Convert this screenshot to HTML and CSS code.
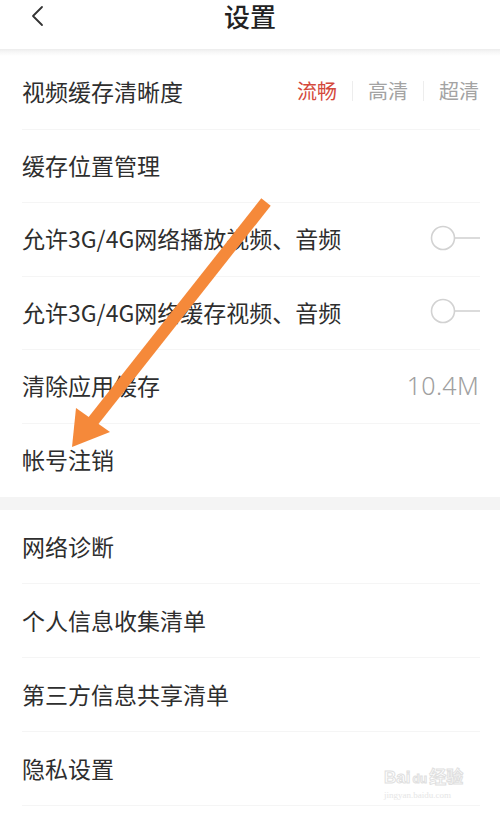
FILE: index.html
```html
<!DOCTYPE html>
<html lang="zh-CN">
<head>
<meta charset="utf-8">
<title>设置</title>
<link rel="stylesheet" href="styles.css">
</head>
<body>
<div class="page">
  <header class="topbar">
    <svg class="back" width="14" height="22" viewBox="0 0 14 22"><path d="M12 2 L3 11 L12 20" fill="none" stroke="#333" stroke-width="1.8" stroke-linecap="round" stroke-linejoin="round"/></svg>
    <h1 class="title">设置</h1>
  </header>
  <div class="shade"></div>

  <section class="group first">
    <div class="row">
      <span class="label">视频缓存清晰度</span>
      <div class="quality">
        <span class="q active">流畅</span><span class="sep"></span><span class="q">高清</span><span class="sep"></span><span class="q">超清</span>
      </div>
    </div>
    <div class="row">
      <span class="label">缓存位置管理</span>
    </div>
    <div class="row">
      <span class="label">允许3G/4G网络播放视频、音频</span>
      <svg class="toggle" width="50" height="28" viewBox="0 0 50 28"><circle cx="13" cy="14" r="11.5" fill="#fff" stroke="#d2d2d2" stroke-width="1.6"/><line x1="24.5" y1="14" x2="50" y2="14" stroke="#d2d2d2" stroke-width="1.6"/></svg>
    </div>
    <div class="row">
      <span class="label">允许3G/4G网络缓存视频、音频</span>
      <svg class="toggle" width="50" height="28" viewBox="0 0 50 28"><circle cx="13" cy="14" r="11.5" fill="#fff" stroke="#d2d2d2" stroke-width="1.6"/><line x1="24.5" y1="14" x2="50" y2="14" stroke="#d2d2d2" stroke-width="1.6"/></svg>
    </div>
    <div class="row">
      <span class="label">清除应用缓存</span>
      <span class="value">10.4M</span>
    </div>
    <div class="row last">
      <span class="label">帐号注销</span>
    </div>
  </section>

  <div class="gap"></div>

  <section class="group">
    <div class="row">
      <span class="label">网络诊断</span>
    </div>
    <div class="row">
      <span class="label">个人信息收集清单</span>
    </div>
    <div class="row">
      <span class="label">第三方信息共享清单</span>
    </div>
    <div class="row">
      <span class="label">隐私设置</span>
    </div>
  </section>

  <svg class="arrow" width="500" height="818" viewBox="0 0 500 818">
    <line x1="266" y1="202" x2="90" y2="425" stroke="#f5893a" stroke-width="12"/>
    <polygon points="72,447 76,408 110,432" fill="#f5893a"/>
  </svg>

  <div class="watermark">
    <span class="wm-main">Bai<span class="wm-du">du</span>经验</span>
    <span class="wm-sub">jingyan.baidu.com</span>
  </div>
</div>
</body>
</html>
```

FILE: styles.css
```css
html, body {
  margin: 0;
  padding: 0;
  background: #ffffff;
}

.page {
  position: relative;
  width: 500px;
  height: 818px;
  overflow: hidden;
  font-family: "Noto Sans CJK SC", "Noto Sans", sans-serif;
  color: #2e2e2e;
}

.topbar {
  height: 49px;
  box-sizing: border-box;
  padding-top: 2px;
  display: flex;
  align-items: flex-start;
  justify-content: center;
  position: relative;
}

.back {
  position: absolute;
  left: 30px;
  top: 5px;
}

.title {
  margin: 0;
  font-size: 26px;
  font-weight: 500;
  color: #222;
  line-height: 28px;
}

.shade {
  height: 7px;
  background: linear-gradient(#ececec, #f6f6f6 40%, #ffffff);
}

.group {
  display: flex;
  flex-direction: column;
}

.row {
  height: 73.5px;
  box-sizing: border-box;
  display: flex;
  align-items: center;
  justify-content: space-between;
  padding: 0 21px 0 22px;
  position: relative;
}

.group + .gap + .group .row {
  height: 74px;
}

.row::after {
  content: "";
  position: absolute;
  left: 22px;
  right: 20px;
  bottom: 0;
  height: 1px;
  background: #f5f5f5;
}

.row.last::after {
  display: none;
}

.label {
  font-size: 23px;
  line-height: 30px;
  color: #2e2e2e;
  margin-top: -3px;
}

.quality {
  display: flex;
  align-items: center;
  gap: 15px;
  margin-top: -3px;
}

.q {
  font-size: 20px;
  color: #a3a3a3;
  line-height: 26px;
}

.q.active {
  color: #d4493c;
}

.sep {
  width: 1px;
  height: 20px;
  background: #ededed;
}

.toggle {
  display: block;
  margin-right: -1px;
  margin-top: -4px;
}

.value {
  font-family: "Noto Sans", sans-serif;
  font-size: 25px;
  font-weight: 300;
  color: #a0a0a0;
  letter-spacing: 0.3px;
  margin-top: -3px;
}

.gap {
  height: 13px;
  background: #f4f4f4;
}

.arrow {
  position: absolute;
  left: 0;
  top: 0;
  pointer-events: none;
}

.watermark {
  position: absolute;
  left: 384px;
  top: 768px;
  display: flex;
  flex-direction: column;
  align-items: flex-start;
  color: #e4e4e4;
  pointer-events: none;
}

.wm-main {
  font-family: "Liberation Sans", "Noto Sans CJK SC", sans-serif;
  font-size: 17px;
  font-weight: 700;
  line-height: 20px;
  color: transparent;
  -webkit-text-stroke: 1px #e0e0e0;
}

.wm-du {
  font-size: 12px;
  margin: 0 2px;
}

.wm-sub {
  font-family: "Liberation Serif", serif;
  font-size: 9px;
  color: #e6e6e6;
  line-height: 12px;
}
```
